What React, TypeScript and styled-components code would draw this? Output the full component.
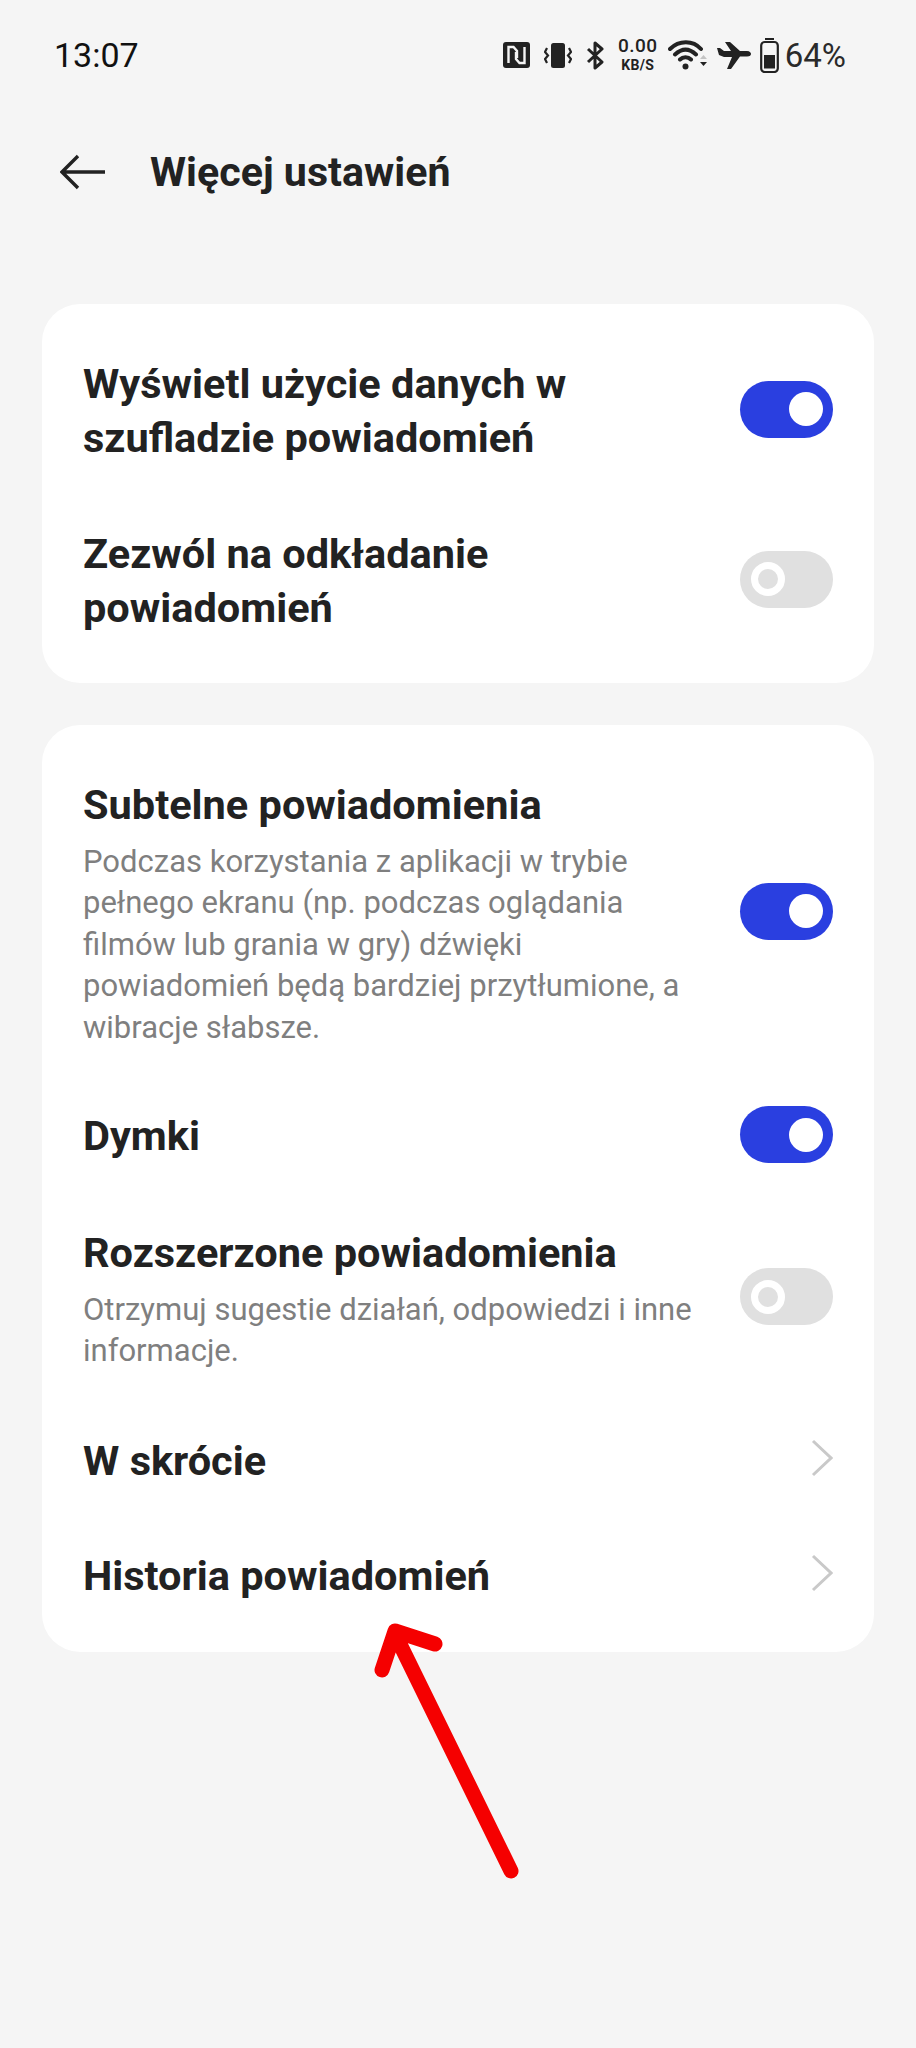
import styled, { createGlobalStyle } from "styled-components";

const GlobalStyle = createGlobalStyle`
  html, body {
    margin: 0;
    padding: 0;
    background: #f5f5f5;
  }
  * {
    box-sizing: border-box;
  }
`;

const Page = styled.div`
  position: relative;
  width: 916px;
  height: 2048px;
  overflow: hidden;
  background: #f5f5f5;
  font-family: Roboto, "Liberation Sans", sans-serif;
  color: #222222;
`;

const StatusBar = styled.div`
  display: flex;
  align-items: center;
  justify-content: space-between;
  height: 56px;
  margin-top: 27px;
  padding: 0 70px 0 54px;
`;

const Time = styled.span`
  font-size: 34px;
  color: #111111;
`;

const StatusIcons = styled.div`
  display: flex;
  align-items: center;
  color: #222222;
`;

const StatusIcon = styled.svg<{ $gap: number }>`
  display: block;
  margin-right: ${(props) => props.$gap}px;
  fill: currentColor;
`;

const Speed = styled.div`
  display: flex;
  flex-direction: column;
  align-items: center;
  width: 44px;
  margin-right: 8px;
  font-weight: 500;
  span:first-child {
    font-size: 19px;
    line-height: 20px;
    letter-spacing: 0.5px;
  }
  span:last-child {
    font-size: 14px;
    line-height: 19px;
    font-weight: 700;
    letter-spacing: 0.3px;
  }
`;

const Percent = styled.span`
  font-size: 33px;
  margin-left: 6px;
  color: #2a2a2a;
`;

const Header = styled.header`
  display: flex;
  align-items: center;
  height: 60px;
  margin-top: 59px;
  padding-left: 60px;
`;

const BackIcon = styled.svg`
  display: block;
  margin-right: 44px;
`;

const Title = styled.h1`
  margin: 0;
  font-size: 41.2px;
  font-weight: 700;
  color: #222222;
`;

const Content = styled.main`
  display: flex;
  flex-direction: column;
  gap: 42px;
  margin-top: 102px;
  padding: 0 42px;
`;

const Card = styled.section<{ $gap: number; $top: number; $bottom: number }>`
  display: flex;
  flex-direction: column;
  gap: ${(props) => props.$gap}px;
  padding: ${(props) => props.$top}px 41px ${(props) => props.$bottom}px;
  background: #ffffff;
  border-radius: 38px;
`;

const Row = styled.div<{ $mt?: number }>`
  display: flex;
  align-items: center;
  justify-content: space-between;
  margin-top: ${(props) => props.$mt ?? 0}px;
`;

const RowText = styled.div`
  width: 640px;
`;

const RowTitle = styled.div`
  font-size: 41.5px;
  line-height: 54px;
  font-weight: 700;
  color: #222222;
`;

const RowDescription = styled.div`
  margin-top: 9px;
  font-size: 31px;
  line-height: 41.4px;
  color: #7f7f7f;
`;

const Toggle = styled.div<{ $on: boolean; $lift: number }>`
  display: flex;
  align-items: center;
  justify-content: ${(props) => (props.$on ? "flex-end" : "flex-start")};
  flex: none;
  width: 93px;
  height: 57px;
  margin: ${(props) => -props.$lift}px 0 ${(props) => props.$lift}px;
  padding: 0 ${(props) => (props.$on ? 10 : 11)}px;
  border-radius: 29px;
  background: ${(props) => (props.$on ? "#2a3fe0" : "#e0e0e0")};
`;

const Knob = styled.div<{ $on: boolean }>`
  width: 34px;
  height: 34px;
  border-radius: 50%;
  background: ${(props) => (props.$on ? "#ffffff" : "#e0e0e0")};
  border: ${(props) => (props.$on ? "none" : "7px solid #ffffff")};
`;

const Chevron = styled.svg`
  display: block;
  flex: none;
  margin-bottom: 5px;
`;

const Annotation = styled.svg`
  position: absolute;
  left: 360px;
  top: 1600px;
`;

function Switch({ on, lift = 2 }: { on: boolean; lift?: number }) {
  return (
    <Toggle $on={on} $lift={lift}>
      <Knob $on={on} />
    </Toggle>
  );
}

function ChevronIcon() {
  return (
    <Chevron width="22" height="38" viewBox="0 0 22 38" fill="none">
      <path d="M2 2 L20 19 L2 36" stroke="#c9c9c9" strokeWidth="3" />
    </Chevron>
  );
}

export default function App() {
  return (
    <Page>
      <GlobalStyle />
      <StatusBar>
        <Time>13:07</Time>
        <StatusIcons>
          <StatusIcon $gap={14} width="27" height="26" viewBox="0 0 27 26">
            <rect width="27" height="26" rx="3" />
            <path
              d="M5.5 21 V5 H10.5 L14 9 V16 M21.5 5 V21 H16.5 L13 17 V10"
              fill="none"
              stroke="#f5f5f5"
              strokeWidth="2.4"
            />
          </StatusIcon>
          <StatusIcon $gap={14} width="28" height="25" viewBox="0 0 28 25">
            <rect x="7" y="0" width="14" height="25" rx="2.5" />
            <path
              d="M3 5 L1 9 L4 12.5 L1 16 L3 20 M25 5 L27 9 L24 12.5 L27 16 L25 20"
              fill="none"
              stroke="currentColor"
              strokeWidth="2.2"
            />
          </StatusIcon>
          <StatusIcon $gap={11} width="19" height="29" viewBox="0 0 19 29">
            <path
              d="M2 8 L16 21 L9 27 V2 L16 8 L2 21"
              fill="none"
              stroke="currentColor"
              strokeWidth="3"
              strokeLinejoin="round"
            />
          </StatusIcon>
          <Speed>
            <span>0.00</span>
            <span>KB/S</span>
          </Speed>
          <StatusIcon $gap={9} width="40" height="30" viewBox="0 0 40 30">
            <path
              d="M2 9 C11 0 25 0 33 9 M7 14.5 C14 8 21 8 28 14.5 M12 19.5 C15 16.5 20 16.5 23 19.5"
              fill="none"
              stroke="currentColor"
              strokeWidth="4"
              strokeLinecap="round"
            />
            <circle cx="17.5" cy="26.5" r="3" />
            <path d="M32 19 l3.5 -4 l3.5 4z" fill="#c4c4c4" />
            <path d="M32 22 l3.5 4 l3.5 -4z" />
          </StatusIcon>
          <StatusIcon $gap={9} width="34" height="28" viewBox="0 0 34 28">
            <path d="M0 7 L3 7 L7 10 L14 10 L8 1 L13 1 L23 10 L30 10 C33 10 34 12 34 13 C34 14 33 15.5 30 15.5 L23 15.5 L14 28 L10 28 L15 16 L7 16 L2 14z" />
          </StatusIcon>
          <StatusIcon $gap={0} width="19" height="35" viewBox="0 0 19 35">
            <rect x="1.2" y="4" width="16.6" height="30" rx="3.5" fill="none" stroke="currentColor" strokeWidth="2.2" />
            <rect x="5" y="0" width="9" height="2" />
            <rect x="4" y="17" width="11" height="13.5" />
          </StatusIcon>
          <Percent>64%</Percent>
        </StatusIcons>
      </StatusBar>

      <Header>
        <BackIcon width="46" height="36" viewBox="0 0 46 36" fill="none">
          <path
            d="M45 18 H3 M18 2 L2 18 L18 34"
            stroke="#222222"
            strokeWidth="3.4"
          />
        </BackIcon>
        <Title>Więcej ustawień</Title>
      </Header>

      <Content>
        <Card $gap={62} $top={53} $bottom={48}>
          <Row>
            <RowText>
              <RowTitle>
                Wyświetl użycie danych w
                <br />
                szufladzie powiadomień
              </RowTitle>
            </RowText>
            <Switch on />
          </Row>
          <Row>
            <RowText>
              <RowTitle>
                Zezwól na odkładanie
                <br />
                powiadomień
              </RowTitle>
            </RowText>
            <Switch on={false} />
          </Row>
        </Card>

        <Card $gap={0} $top={53} $bottom={49}>
          <Row>
            <RowText>
              <RowTitle>Subtelne powiadomienia</RowTitle>
              <RowDescription>
                Podczas korzystania z aplikacji w trybie
                <br />
                pełnego ekranu (np. podczas oglądania
                <br />
                filmów lub grania w gry) dźwięki
                <br />
                powiadomień będą bardziej przytłumione, a
                <br />
                wibracje słabsze.
              </RowDescription>
            </RowText>
            <Switch on />
          </Row>
          <Row $mt={59}>
            <RowText>
              <RowTitle>Dymki</RowTitle>
            </RowText>
            <Switch on lift={1} />
          </Row>
          <Row $mt={62}>
            <RowText>
              <RowTitle>Rozszerzone powiadomienia</RowTitle>
              <RowDescription>
                Otrzymuj sugestie działań, odpowiedzi i inne
                <br />
                informacje.
              </RowDescription>
            </RowText>
            <Switch on={false} />
          </Row>
          <Row $mt={62}>
            <RowText>
              <RowTitle>W skrócie</RowTitle>
            </RowText>
            <ChevronIcon />
          </Row>
          <Row $mt={61}>
            <RowText>
              <RowTitle>Historia powiadomień</RowTitle>
            </RowText>
            <ChevronIcon />
          </Row>
        </Card>
      </Content>

      <Annotation width="170" height="300" viewBox="0 0 170 300" fill="none">
        <path
          d="M151 271 L35 34 M22 70 L35 31 L75 44"
          stroke="#f50000"
          strokeWidth="15"
          strokeLinecap="round"
          strokeLinejoin="round"
        />
      </Annotation>
    </Page>
  );
}
